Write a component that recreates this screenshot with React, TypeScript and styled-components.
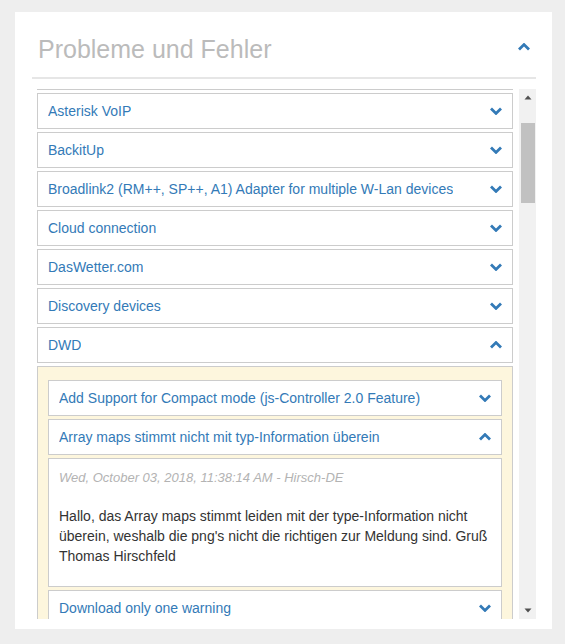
import React, { useLayoutEffect, useRef } from "react";
import styled, { createGlobalStyle } from "styled-components";

const GlobalStyle = createGlobalStyle`
  html, body { margin: 0; padding: 0; background: #eeeeee; }
  body {
    font-family: "Liberation Sans", Arial, Helvetica, sans-serif;
    font-size: 14px;
    color: #333333;
  }
  * { box-sizing: border-box; }
`;

const Page = styled.div`
  padding: 12px 0 0 15px;
`;

const Card = styled.section`
  width: 537px;
  height: 617px;
  background: #ffffff;
  padding: 0 16px 10px 17px;
  display: flex;
  flex-direction: column;
`;

const Header = styled.header`
  flex: none;
  height: 67px;
  border-bottom: 2px solid #e6e6e6;
  display: flex;
  align-items: center;
  justify-content: space-between;
  padding: 0 6px;
`;

const Title = styled.h2`
  margin: 10px 0 0 0;
  font-size: 25px;
  font-weight: normal;
  color: #bbbbbb;
`;

const HeaderToggle = styled.span`
  display: flex;
  margin-top: 4px;
`;

const Body = styled.div`
  flex: 1;
  min-height: 0;
  margin-top: 10px;
  padding-left: 5px;
  display: flex;
  gap: 6px;
`;

const Viewport = styled.div`
  flex: 1;
  min-width: 0;
  overflow: hidden;
`;

const List = styled.div`
  display: flex;
  flex-direction: column;
  gap: 3px;
`;

const ItemHead = styled.div`
  height: 36px;
  border: 1px solid #cccccc;
  background: #ffffff;
  display: flex;
  align-items: center;
  justify-content: space-between;
  padding: 0 10px;
  color: #337ab7;
  white-space: nowrap;
`;

const ItemLabel = styled.span`
  overflow: hidden;
  text-overflow: ellipsis;
`;

const Panel = styled.div`
  border: 1px solid #cccccc;
  background: #fdf6dd;
  padding: 13px 10px 10px 10px;
`;

const Content = styled.div`
  border: 1px solid #cccccc;
  background: #ffffff;
  padding: 9px 10px 20px 10px;
`;

const Meta = styled.div`
  line-height: 20px;
  font-size: 13px;
  font-style: italic;
  color: #b3b3b3;
`;

const Message = styled.p`
  margin: 18px 0 0 0;
  line-height: 20px;
  color: #333333;
`;

const Scrollbar = styled.div`
  flex: none;
  width: 17px;
  background: #f1f1f1;
  display: flex;
  flex-direction: column;
`;

const ScrollButton = styled.div`
  flex: none;
  height: 17px;
  display: flex;
  align-items: center;
  justify-content: center;
`;

const Track = styled.div`
  flex: 1;
  display: flex;
  flex-direction: column;
`;

const Thumb = styled.div<{ $top: number; $size: number }>`
  margin: ${(p) => p.$top}px 1px 0 2px;
  height: ${(p) => p.$size}px;
  background: #c1c1c1;
`;

const Chevron = ({ up }: { up?: boolean }) => (
  <svg width="12" height="8" viewBox="0 0 12 8" style={{ flex: "none" }}>
    <path
      d={up ? "M1 6.6 L6 1.6 L11 6.6" : "M1 1.4 L6 6.4 L11 1.4"}
      fill="none"
      stroke="#337ab7"
      strokeWidth="2.8"
    />
  </svg>
);

const Arrow = ({ up }: { up?: boolean }) => (
  <svg width="8" height="5" viewBox="0 0 8 5">
    <polygon points={up ? "0.5,4.5 4,0.5 7.5,4.5" : "0.5,0.5 4,4.5 7.5,0.5"} fill="#505050" />
  </svg>
);

const Item = ({ label, open }: { label: string; open?: boolean }) => (
  <ItemHead>
    <ItemLabel>{label}</ItemLabel>
    <Chevron up={open} />
  </ItemHead>
);

const before = ["Alexa Shopping List"];
const outer = [
  "Asterisk VoIP",
  "BackitUp",
  "Broadlink2 (RM++, SP++, A1) Adapter for multiple W-Lan devices",
  "Cloud connection",
  "DasWetter.com",
  "Discovery devices",
];
const after = ["Echarts", "Email"];

export default function App() {
  const ref = useRef<HTMLDivElement>(null);
  useLayoutEffect(() => {
    if (ref.current) ref.current.scrollTop = before.length * 39 - 4;
  }, []);
  return (
    <>
      <GlobalStyle />
      <Page>
        <Card>
          <Header>
            <Title>Probleme und Fehler</Title>
            <HeaderToggle>
              <Chevron up />
            </HeaderToggle>
          </Header>
          <Body>
            <Viewport ref={ref}>
              <List>
                {before.map((l) => (
                  <Item key={l} label={l} />
                ))}
                {outer.map((l) => (
                  <Item key={l} label={l} />
                ))}
                <Item label="DWD" open />
                <Panel>
                  <List>
                    <Item label="Add Support for Compact mode (js-Controller 2.0 Feature)" />
                    <Item label="Array maps stimmt nicht mit typ-Information überein" open />
                    <Content>
                      <Meta>Wed, October 03, 2018, 11:38:14 AM - Hirsch-DE</Meta>
                      <Message>
                        Hallo, das Array maps stimmt leiden mit der type-Information nicht
                        überein, weshalb die png's nicht die richtigen zur Meldung sind. Gruß
                        Thomas Hirschfeld
                      </Message>
                    </Content>
                    <Item label="Download only one warning" />
                    <Item label="Unwetterwarnungen nicht angezeigt" />
                  </List>
                </Panel>
                {after.map((l) => (
                  <Item key={l} label={l} />
                ))}
              </List>
            </Viewport>
            <Scrollbar>
              <ScrollButton>
                <Arrow up />
              </ScrollButton>
              <Track>
                <Thumb $top={17} $size={80} />
              </Track>
              <ScrollButton>
                <Arrow />
              </ScrollButton>
            </Scrollbar>
          </Body>
        </Card>
      </Page>
    </>
  );
}
